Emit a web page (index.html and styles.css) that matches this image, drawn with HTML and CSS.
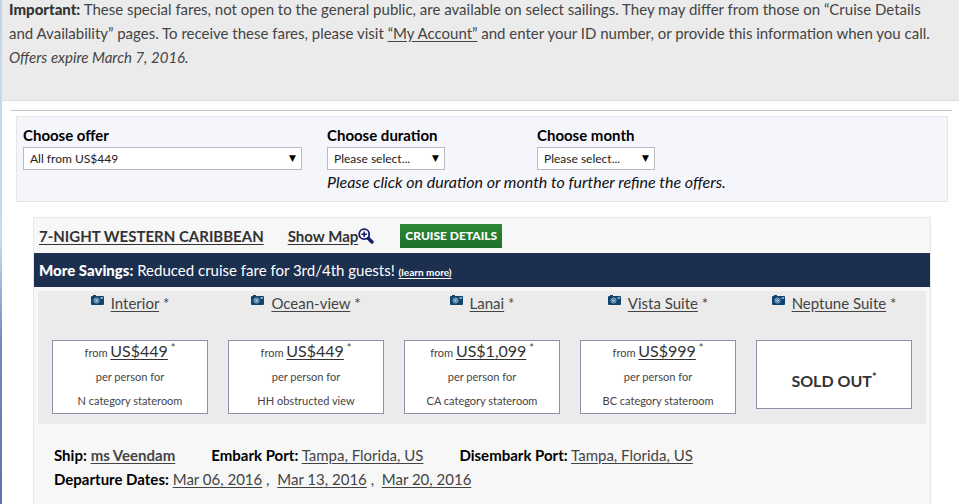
FILE: index.html
```
<!DOCTYPE html>
<html lang="en">
<head>
    <meta charset="UTF-8">
    <meta name="viewport" content="width=device-width, initial-scale=1.0">
    <title>Special Cruise Fares</title>
    <link rel="stylesheet" href="styles.css">
</head>
<body>
    <svg class="sprite" aria-hidden="true">
        <symbol id="camera" viewBox="0 0 13 11">
            <path d="M1 1h1V0h3v1h7a1 1 0 0 1 1 1v7a1 1 0 0 1-1 1H1a1 1 0 0 1-1-1V2a1 1 0 0 1 1-1z" fill="#0f4470"/>
            <circle cx="5.5" cy="5.5" r="2.5" fill="#0f4470" stroke="#c3d6e6" stroke-width=".8"/>
            <circle cx="5.5" cy="5.5" r="1.3" fill="#c3d6e6"/>
            <path d="M9.5 2.5H12v1H9.5z" fill="#fff"/>
        </symbol>
        <symbol id="magnify" viewBox="0 0 16 16">
            <path d="M10 10l4 4" stroke="#151a6b" stroke-width="3.4" stroke-linecap="round"/>
            <circle cx="6.2" cy="6.2" r="5" fill="#fff" stroke="#151a6b" stroke-width="1.8"/>
            <path d="M6.2 3.4v5.6M3.4 6.2H9" stroke="#151a6b" stroke-width="1.6"/>
        </symbol>
    </svg>

    <div class="notice">
        <p><strong>Important:</strong> These special fares, not open to the general public, are available on select sailings. They may differ from those on “Cruise Details and Availability” pages. To receive these fares, please visit <a href="#">“My Account”</a> and enter your ID number, or provide this information when you call. <em>Offers expire March 7, 2016.</em></p>
    </div>

    <hr>

    <form class="filters">
        <div class="field offer">
            <label for="offer">Choose offer</label>
            <div class="select">
                <select id="offer" name="offer">
                    <option>All from US$449</option>
                </select>
            </div>
        </div>
        <div class="field duration">
            <label for="duration">Choose duration</label>
            <div class="select">
                <select id="duration" name="duration">
                    <option>Please select...</option>
                </select>
            </div>
        </div>
        <div class="field month">
            <label for="month">Choose month</label>
            <div class="select">
                <select id="month" name="month">
                    <option>Please select...</option>
                </select>
            </div>
        </div>
        <p class="hint">Please click on duration or month to further refine the offers.</p>
    </form>

    <div class="cruise">
        <div class="cruise-header">
            <a class="cruise-name" href="#">7-NIGHT WESTERN CARIBBEAN</a>
            <a class="show-map" href="#">Show Map<svg class="magnify"><use href="#magnify"/></svg></a>
            <button type="button">CRUISE DETAILS</button>
        </div>
        <div class="savings">
            <strong>More Savings:</strong> Reduced cruise fare for 3rd/4th guests! <a href="#">(learn more)</a>
        </div>
        <div class="fares">
            <div class="fare">
                <div class="room"><svg class="camera"><use href="#camera"/></svg><a href="#">Interior</a> *</div>
                <div class="price">
                    <p>from <a href="#">US$449</a> <sup>*</sup></p>
                    <p>per person for</p>
                    <p>N category stateroom</p>
                </div>
            </div>
            <div class="fare">
                <div class="room"><svg class="camera"><use href="#camera"/></svg><a href="#">Ocean-view</a> *</div>
                <div class="price">
                    <p>from <a href="#">US$449</a> <sup>*</sup></p>
                    <p>per person for</p>
                    <p>HH obstructed view</p>
                </div>
            </div>
            <div class="fare">
                <div class="room"><svg class="camera"><use href="#camera"/></svg><a href="#">Lanai</a> *</div>
                <div class="price">
                    <p>from <a href="#">US$1,099</a> <sup>*</sup></p>
                    <p>per person for</p>
                    <p>CA category stateroom</p>
                </div>
            </div>
            <div class="fare">
                <div class="room"><svg class="camera"><use href="#camera"/></svg><a href="#">Vista Suite</a> *</div>
                <div class="price">
                    <p>from <a href="#">US$999</a> <sup>*</sup></p>
                    <p>per person for</p>
                    <p>BC category stateroom</p>
                </div>
            </div>
            <div class="fare">
                <div class="room"><svg class="camera"><use href="#camera"/></svg><a href="#">Neptune Suite</a> *</div>
                <div class="price sold-out">
                    <p>SOLD OUT<sup>*</sup></p>
                </div>
            </div>
        </div>
        <div class="details">
            <div class="ports">
                <span><strong>Ship:</strong> <a class="ship" href="#">ms Veendam</a></span>
                <span><strong>Embark Port:</strong> <a href="#">Tampa, Florida, US</a></span>
                <span><strong>Disembark Port:</strong> <a href="#">Tampa, Florida, US</a></span>
            </div>
            <div class="dates">
                <strong>Departure Dates:</strong> <a href="#">Mar 06, 2016</a> ,&nbsp; <a href="#">Mar 13, 2016</a> ,&nbsp; <a href="#">Mar 20, 2016</a>
            </div>
        </div>
    </div>
</body>
</html>
```
FILE: styles.css
```
* {
    box-sizing: border-box;
}

body {
    margin: 0;
    padding-left: 2px;
    font-family: Lato, "Liberation Sans", sans-serif;
    font-size: 15px;
    line-height: 24px;
    color: #444;
    background: linear-gradient(#c3d5ed 0, #c9d9ee 240px, #6f8dc0 340px, #5876ad 100%) left top / 2px 100% no-repeat #fff;
}

p {
    margin: 0;
}

a {
    color: #444;
    text-underline-offset: 2px;
}

.sprite {
    display: none;
}

.notice {
    margin-top: -3px;
    padding: 0 14px 31px 7px;
    background-color: #ebebeb;
    border-bottom: 1px solid #dededb;
}

.notice strong {
    font-weight: 900;
    color: #333;
}

hr {
    margin: 9px 7px 5px 9px;
    border: 0;
    border-top: 1px solid #c4c4c8;
}

.filters {
    display: grid;
    grid-template-columns: 304px 210px 1fr;
    margin: 0 11px 0 14px;
    padding: 6px 6px 7px;
    background-color: #f5f5fc;
    border: 1px solid #e6e6e6;
    color: #111;
}

.field label {
    display: block;
    font-weight: bold;
    color: #000;
}

.select {
    position: relative;
    width: 118px;
}

.offer .select {
    width: 279px;
}

.select::after {
    content: "▼";
    position: absolute;
    top: 0;
    right: 6px;
    font-family: "DejaVu Sans", sans-serif;
    font-size: 9px;
    line-height: 23px;
    color: #000;
    pointer-events: none;
}

select {
    display: block;
    width: 100%;
    height: 23px;
    padding: 0 6px;
    appearance: none;
    background-color: #fff;
    border: 1px solid #bbb;
    border-radius: 0;
    font-family: inherit;
    font-size: 12px;
    color: #222;
}

.hint {
    grid-column: 2 / 4;
    font-style: italic;
    font-size: 16px;
}

.cruise {
    margin: 15px 28px 0 31px;
    padding-bottom: 13px;
    background-color: #f7f7f7;
    border: 1px solid #e8e8e8;
    border-bottom: 0;
}

.cruise-header {
    display: flex;
    align-items: center;
    height: 35px;
    padding: 0 5px;
}

.cruise-header a {
    font-weight: bold;
    color: #333;
}

.show-map {
    display: flex;
    align-items: center;
    margin: 0 26px 0 24px;
}

.magnify {
    width: 16px;
    height: 16px;
}

button {
    height: 24px;
    padding: 0 5px;
    border: 0;
    background: linear-gradient(#2c8a35, #1d6f2b);
    color: #fff;
    font-family: inherit;
    font-size: 12px;
    font-weight: 900;
    cursor: pointer;
}

.savings {
    padding: 5px;
    background-color: #1d2f4e;
    color: #fff;
}

.savings strong {
    font-weight: 900;
}

.savings a {
    font-size: 10px;
    line-height: 1;
    font-weight: bold;
    color: #fff;
}

.fares {
    display: flex;
    gap: 20px;
    margin: 4px 4px 0;
    padding: 0 14px 10px;
    background-color: #ebebeb;
}

.fare {
    flex: 1;
    text-align: center;
    white-space: nowrap;
}

.room {
    margin-bottom: 25px;
}

.camera {
    width: 13px;
    height: 11px;
    margin-right: 7px;
    vertical-align: 3px;
}

.price {
    background-color: #fff;
    border: 1px solid #8e8ea6;
    font-size: 11px;
}

.price a {
    font-size: 16px;
    line-height: 1;
    color: #333;
}

sup {
    font-size: 11px;
    line-height: 0;
}

.sold-out {
    padding: 28px 0 15px;
    font-size: 16px;
    font-weight: bold;
    color: #333;
}

.details {
    padding: 19px 20px 0;
}

.details strong {
    color: #000;
}

.ports {
    display: flex;
    gap: 36px;
}

.ship {
    font-weight: bold;
}
```
